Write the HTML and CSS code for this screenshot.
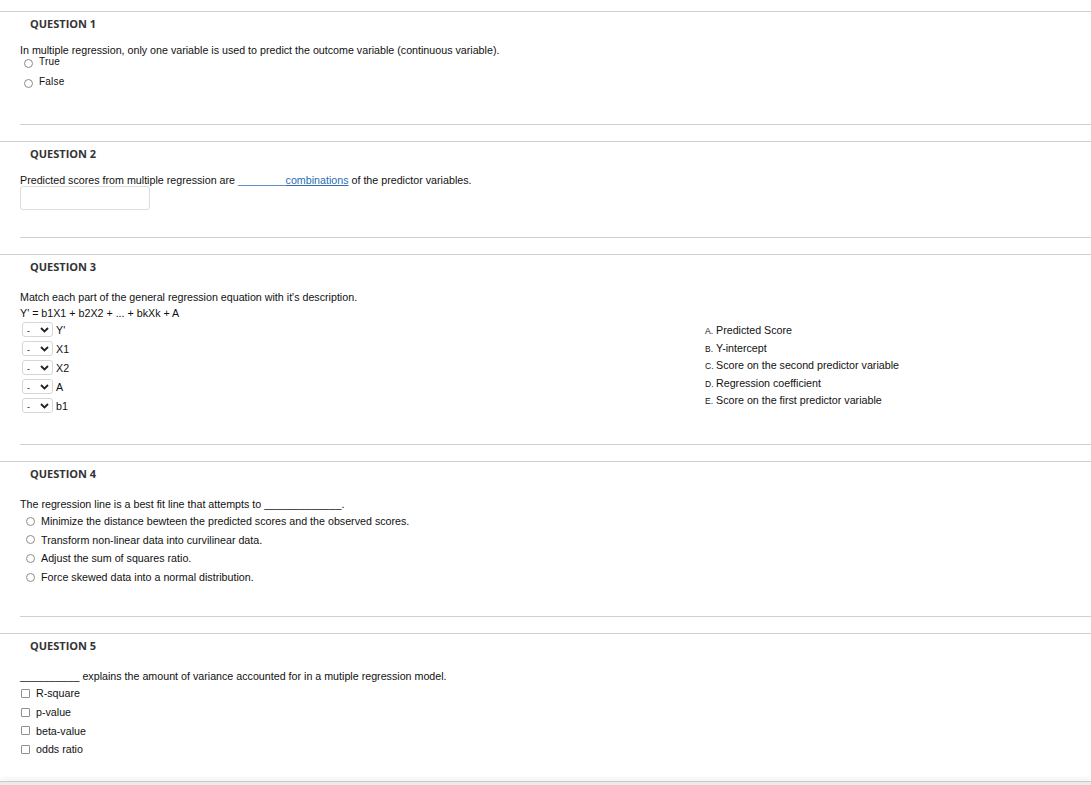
FILE: index.html
```html
<!DOCTYPE html>
<html lang="en">
<head>
    <meta charset="UTF-8">
    <meta name="viewport" content="width=device-width, initial-scale=1.0">
    <title>Test</title>
    <link rel="stylesheet" href="styles.css">
</head>
<body>

<div class="page">

    <section class="question compact">
        <h3 class="q-title">QUESTION 1</h3>
        <div class="q-body q1">
            <p class="q-text">In multiple regression, only one variable is used to predict the outcome variable (continuous variable).</p>
            <ul class="choices tight">
                <li><label class="choice"><input type="radio" name="q1"> True</label></li>
                <li><label class="choice"><input type="radio" name="q1"> False</label></li>
            </ul>
        </div>
        <div class="q-end"></div>
    </section>

    <section class="question compact">
        <h3 class="q-title">QUESTION 2</h3>
        <div class="q-body q2">
            <p class="q-text">Predicted scores from multiple regression are <span class="answer-link">________<u>combinations</u></span> of the predictor variables.</p>
            <input type="text" class="fill-input">
        </div>
        <div class="q-end"></div>
    </section>

    <section class="question">
        <h3 class="q-title">QUESTION 3</h3>
        <div class="q-body q3">
            <p class="q-text">Match each part of the general regression equation with it's description.</p>
            <p class="q-line">Y' = b1X1 + b2X2 + ... + bkXk + A</p>
            <div class="match">
                <div class="match-left">
                    <div class="match-row"><span class="select"><span class="dash">-</span><svg width="9" height="6" viewBox="0 0 9 6"><path d="M1 1 L4.5 4.5 L8 1" fill="none" stroke="#222" stroke-width="1.8"/></svg></span><span class="match-label">Y'</span></div>
                    <div class="match-row"><span class="select"><span class="dash">-</span><svg width="9" height="6" viewBox="0 0 9 6"><path d="M1 1 L4.5 4.5 L8 1" fill="none" stroke="#222" stroke-width="1.8"/></svg></span><span class="match-label">X1</span></div>
                    <div class="match-row"><span class="select"><span class="dash">-</span><svg width="9" height="6" viewBox="0 0 9 6"><path d="M1 1 L4.5 4.5 L8 1" fill="none" stroke="#222" stroke-width="1.8"/></svg></span><span class="match-label">X2</span></div>
                    <div class="match-row"><span class="select"><span class="dash">-</span><svg width="9" height="6" viewBox="0 0 9 6"><path d="M1 1 L4.5 4.5 L8 1" fill="none" stroke="#222" stroke-width="1.8"/></svg></span><span class="match-label">A</span></div>
                    <div class="match-row"><span class="select"><span class="dash">-</span><svg width="9" height="6" viewBox="0 0 9 6"><path d="M1 1 L4.5 4.5 L8 1" fill="none" stroke="#222" stroke-width="1.8"/></svg></span><span class="match-label">b1</span></div>
                </div>
                <ul class="match-right">
                    <li><span class="letter">A.</span>Predicted Score</li>
                    <li><span class="letter">B.</span>Y-intercept</li>
                    <li><span class="letter">C.</span>Score on the second predictor variable</li>
                    <li><span class="letter">D.</span>Regression coefficient</li>
                    <li><span class="letter">E.</span>Score on the first predictor variable</li>
                </ul>
            </div>
        </div>
        <div class="q-end"></div>
    </section>

    <section class="question">
        <h3 class="q-title">QUESTION 4</h3>
        <div class="q-body q4">
            <p class="q-text">The regression line is a best fit line that attempts to _____________.</p>
            <ul class="choices roomy">
                <li><label class="choice"><input type="radio" name="q4"> Minimize the distance bewteen the predicted scores and the observed scores.</label></li>
                <li><label class="choice"><input type="radio" name="q4"> Transform non-linear data into curvilinear data.</label></li>
                <li><label class="choice"><input type="radio" name="q4"> Adjust the sum of squares ratio.</label></li>
                <li><label class="choice"><input type="radio" name="q4"> Force skewed data into a normal distribution.</label></li>
            </ul>
        </div>
        <div class="q-end"></div>
    </section>

    <section class="question">
        <h3 class="q-title">QUESTION 5</h3>
        <div class="q-body q5">
            <p class="q-text">__________ explains the amount of variance accounted for in a mutiple regression model.</p>
            <ul class="choices roomy boxes">
                <li><label class="choice"><input type="checkbox"> R-square</label></li>
                <li><label class="choice"><input type="checkbox"> p-value</label></li>
                <li><label class="choice"><input type="checkbox"> beta-value</label></li>
                <li><label class="choice"><input type="checkbox"> odds ratio</label></li>
            </ul>
        </div>
        <div class="q-end"></div>
    </section>

</div>

<div class="submit-bar"></div>

</body>
</html>
```

FILE: styles.css
```css
body {
    margin: 0;
    font-family: "Liberation Sans", Arial, sans-serif;
    font-size: 10.7px;
    color: #111;
    background-color: #fff;
}
.page {
    padding-top: 11px;
}
.question {
    border-top: 1px solid #d0d0d0;
}
.q-title {
    margin: 0;
    padding: 4px 0 0 30px;
    font-family: "Open Sans", sans-serif;
    font-weight: 700;
    font-size: 11px;
    line-height: 15px;
    color: #333;
}
.q-body {
    padding-left: 20px;
}
.q-text {
    margin: 15px 0 0;
    line-height: 16px;
}
.compact .q-text {
    margin-top: 14px;
    line-height: 11px;
}
.q-line {
    margin: 0;
    line-height: 16px;
}
.q-end {
    margin: 0 0 16px 20px;
    border-top: 1px solid #d0d0d0;
}

/* choices */
.choices {
    list-style: none;
    margin: 0;
    padding: 0;
}
.choice {
    display: flex;
    align-items: center;
    gap: 6px;
}
.choice input {
    appearance: none;
    -webkit-appearance: none;
    box-sizing: border-box;
    width: 9px;
    height: 9px;
    margin: 0;
    border: 1px solid #8c8c8c;
    border-radius: 50%;
    background: #fff;
}
.boxes .choice input {
    border-radius: 1px;
    border-color: #909090;
}
.tight {
    padding-left: 4px;
    font-size: 10px;
    letter-spacing: 0.2px;
}
.tight li {
    height: 12px;
    line-height: 12px;
}
.tight li + li {
    margin-top: 8px;
}
.tight .choice {
    align-items: flex-start;
}
.tight .choice input {
    margin-top: 3px;
}
.roomy {
    padding-left: 6px;
}
.roomy li {
    line-height: 18.6px;
}
.boxes {
    padding-left: 1px;
}

.q1 {
    padding-bottom: 36px;
}
.q2 {
    padding-bottom: 27px;
}
.q3 {
    padding-bottom: 31px;
}
.q4 {
    padding-bottom: 30px;
}
.q5 {
    padding-bottom: 30px;
}

/* question 2 */
.answer-link {
    color: #2a6db2;
}
.answer-link u {
    text-underline-offset: 1px;
}
.fill-input {
    display: block;
    box-sizing: border-box;
    width: 130px;
    height: 24px;
    margin: 0;
    padding: 0;
    border: 1px solid #dedede;
    border-radius: 3px;
    background: #fff;
}

/* question 3 */
.match {
    display: grid;
    grid-template-columns: 685px 1fr;
    align-items: start;
    margin-top: 1px;
}
.match-left {
    display: flex;
    flex-direction: column;
    gap: 4px;
}
.match-row {
    display: flex;
    align-items: center;
    height: 15px;
}
.select {
    display: flex;
    align-items: center;
    box-sizing: border-box;
    width: 31px;
    height: 15px;
    margin-left: 2px;
    padding-left: 4px;
    border: 1px solid #d6d6d6;
    border-radius: 3px;
}
.dash {
    width: 13px;
    font-size: 9px;
    line-height: 9px;
    margin-top: 3px;
}
.match-label {
    margin-left: 3px;
}
.match-right {
    list-style: none;
    margin: 0;
    padding: 0;
}
.match-right li {
    height: 17.6px;
    line-height: 17.6px;
}
.letter {
    display: inline-block;
    width: 11px;
    font-size: 8.5px;
    line-height: 10px;
}

.submit-bar {
    position: fixed;
    left: 0;
    right: 0;
    bottom: 0;
    height: 3px;
    border-top: 1px solid #c9c9c9;
    background-color: #ebebeb;
    box-shadow: 0 -3px 4px rgba(0, 0, 0, 0.05);
}
```
